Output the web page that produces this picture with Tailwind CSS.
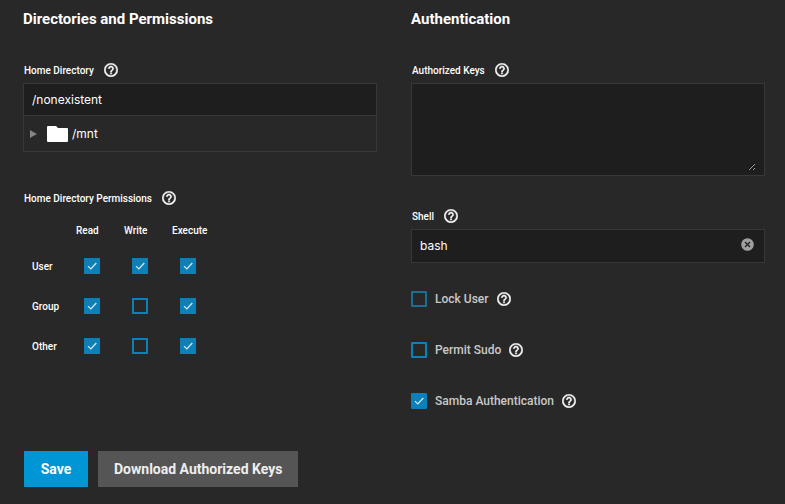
<!DOCTYPE html>
<html lang="en">
<head>
<meta charset="utf-8">
<meta name="viewport" content="width=device-width, initial-scale=1">
<title>Edit User</title>
<script src="https://cdn.jsdelivr.net/npm/@tailwindcss/browser@4"></script>
</head>
<body class="min-h-screen bg-[#282828] font-[Inter,sans-serif] text-white">
<svg class="hidden" aria-hidden="true">
  <symbol id="help" viewBox="1.700 1.700 20.600 20.600"><path fill="currentColor" stroke="currentColor" stroke-width=".6" d="M11 18h2v-2h-2v2zm1-16C6.480 2 2 6.480 2 12s4.480 10 10 10 10-4.480 10-10S17.520 2 12 2zm0 18c-4.410 0-8-3.590-8-8s3.590-8 8-8 8 3.590 8 8-3.590 8-8 8zm0-14c-2.210 0-4 1.790-4 4h2c0-1.100.9-2 2-2s2 .9 2 2c0 2-3 1.750-3 5h2c0-2.250 3-2.500 3-5 0-2.210-1.790-4-4-4z"/></symbol>
  <symbol id="check" viewBox="0 0 16 16"><path fill="none" stroke="currentColor" stroke-width="1.200" d="M4 8.200 6.800 11 12.300 5"/></symbol>
</svg>
<form class="pt-2 pr-5 pb-4 pl-[23px]">
  <div class="grid grid-cols-2 gap-[34px]">
    <section>
      <h2 class="font-[Roboto,sans-serif] text-[15px] leading-[22px] font-bold">Directories and Permissions</h2>
      <div class="mt-8 flex h-4 items-center gap-[10px] pl-px font-[Roboto,sans-serif] text-[10px] font-medium">
        <label for="home">Home Directory</label>
        <button type="button" aria-label="Home Directory help"><svg class="size-[14px]"><use href="#help"/></svg></button>
      </div>
      <input id="home" type="text" value="/nonexistent" class="mt-[5px] block h-[33px] w-full border border-[#383838] bg-[#1e1e1e] px-2 text-[12px] outline-none">
      <div class="flex h-9 items-center border border-t-0 border-[#383838] pl-[6px] text-[12px]">
        <button type="button" aria-label="Expand /mnt"><svg class="h-2 w-[7px] text-[#858585]" viewBox="0 0 7 8"><path fill="currentColor" d="M0 0 7 4 0 8z"/></svg></button>
        <svg class="ml-[10px] h-4 w-[21px]" viewBox="0 0 21 16"><path fill="currentColor" d="M1 0h8l2 2h9a1 1 0 0 1 1 1v12a1 1 0 0 1-1 1H1a1 1 0 0 1-1-1V1a1 1 0 0 1 1-1z"/></svg>
        <span class="ml-1">/mnt</span>
      </div>
      <div class="mt-[38px] flex h-4 items-center gap-[10px] pl-px font-[Roboto,sans-serif] text-[10px] font-medium">
        <span id="perm">Home Directory Permissions</span>
        <button type="button" aria-label="Home Directory Permissions help"><svg class="size-[14px]"><use href="#help"/></svg></button>
      </div>
      <table aria-labelledby="perm" class="mt-2 ml-[9px] table-fixed text-left font-[Roboto,sans-serif] text-[10px] font-medium">
        <thead>
          <tr class="h-8"><td class="w-11"></td><th scope="col" class="w-12 font-medium">Read</th><th scope="col" class="w-12 font-medium">Write</th><th scope="col" class="w-12 font-medium">Execute</th></tr>
        </thead>
        <tbody>
          <tr class="h-10">
            <th scope="row" class="font-medium">User</th>
            <td class="pl-2"><span class="grid size-4"><input type="checkbox" checked aria-label="User read" class="peer col-start-1 row-start-1 size-4 appearance-none border-2 border-[#0c80b8] checked:bg-[#0c80b8]"><svg class="pointer-events-none invisible col-start-1 row-start-1 size-4 text-[#d8e8f0] peer-checked:visible"><use href="#check"/></svg></span></td>
            <td class="pl-2"><span class="grid size-4"><input type="checkbox" checked aria-label="User write" class="peer col-start-1 row-start-1 size-4 appearance-none border-2 border-[#0c80b8] checked:bg-[#0c80b8]"><svg class="pointer-events-none invisible col-start-1 row-start-1 size-4 text-[#d8e8f0] peer-checked:visible"><use href="#check"/></svg></span></td>
            <td class="pl-2"><span class="grid size-4"><input type="checkbox" checked aria-label="User execute" class="peer col-start-1 row-start-1 size-4 appearance-none border-2 border-[#0c80b8] checked:bg-[#0c80b8]"><svg class="pointer-events-none invisible col-start-1 row-start-1 size-4 text-[#d8e8f0] peer-checked:visible"><use href="#check"/></svg></span></td>
          </tr>
          <tr class="h-10">
            <th scope="row" class="font-medium">Group</th>
            <td class="pl-2"><span class="grid size-4"><input type="checkbox" checked aria-label="Group read" class="peer col-start-1 row-start-1 size-4 appearance-none border-2 border-[#0c80b8] checked:bg-[#0c80b8]"><svg class="pointer-events-none invisible col-start-1 row-start-1 size-4 text-[#d8e8f0] peer-checked:visible"><use href="#check"/></svg></span></td>
            <td class="pl-2"><span class="grid size-4"><input type="checkbox" aria-label="Group write" class="peer col-start-1 row-start-1 size-4 appearance-none border-2 border-[#0c80b8] checked:bg-[#0c80b8]"><svg class="pointer-events-none invisible col-start-1 row-start-1 size-4 text-[#d8e8f0] peer-checked:visible"><use href="#check"/></svg></span></td>
            <td class="pl-2"><span class="grid size-4"><input type="checkbox" checked aria-label="Group execute" class="peer col-start-1 row-start-1 size-4 appearance-none border-2 border-[#0c80b8] checked:bg-[#0c80b8]"><svg class="pointer-events-none invisible col-start-1 row-start-1 size-4 text-[#d8e8f0] peer-checked:visible"><use href="#check"/></svg></span></td>
          </tr>
          <tr class="h-10">
            <th scope="row" class="font-medium">Other</th>
            <td class="pl-2"><span class="grid size-4"><input type="checkbox" checked aria-label="Other read" class="peer col-start-1 row-start-1 size-4 appearance-none border-2 border-[#0c80b8] checked:bg-[#0c80b8]"><svg class="pointer-events-none invisible col-start-1 row-start-1 size-4 text-[#d8e8f0] peer-checked:visible"><use href="#check"/></svg></span></td>
            <td class="pl-2"><span class="grid size-4"><input type="checkbox" aria-label="Other write" class="peer col-start-1 row-start-1 size-4 appearance-none border-2 border-[#0c80b8] checked:bg-[#0c80b8]"><svg class="pointer-events-none invisible col-start-1 row-start-1 size-4 text-[#d8e8f0] peer-checked:visible"><use href="#check"/></svg></span></td>
            <td class="pl-2"><span class="grid size-4"><input type="checkbox" checked aria-label="Other execute" class="peer col-start-1 row-start-1 size-4 appearance-none border-2 border-[#0c80b8] checked:bg-[#0c80b8]"><svg class="pointer-events-none invisible col-start-1 row-start-1 size-4 text-[#d8e8f0] peer-checked:visible"><use href="#check"/></svg></span></td>
          </tr>
        </tbody>
      </table>
    </section>
    <section>
      <h2 class="font-[Roboto,sans-serif] text-[15px] leading-[22px] font-bold">Authentication</h2>
      <div class="mt-8 flex h-4 items-center gap-[10px] pl-px font-[Roboto,sans-serif] text-[10px] font-medium">
        <label for="keys">Authorized Keys</label>
        <button type="button" aria-label="Authorized Keys help"><svg class="size-[14px]"><use href="#help"/></svg></button>
      </div>
      <div class="mt-[5px] border border-[#383838] bg-[#1e1e1e] px-2 pt-2 pb-1">
        <textarea id="keys" class="block h-[79px] w-full resize-y text-[12px] scheme-dark outline-none"></textarea>
      </div>
      <div class="mt-8 flex h-4 items-center gap-[10px] pl-px font-[Roboto,sans-serif] text-[10px] font-medium">
        <label for="shell">Shell</label>
        <button type="button" aria-label="Shell help"><svg class="size-[14px]"><use href="#help"/></svg></button>
      </div>
      <div class="mt-[5px] flex h-[34px] items-center border border-[#383838] bg-[#1e1e1e] pr-[10px] pl-2">
        <input id="shell" type="text" role="combobox" aria-expanded="false" value="bash" class="min-w-0 flex-1 text-[12px] outline-none">
        <button type="button" aria-label="Clear shell" class="-mt-1"><svg class="block size-[13px]" viewBox="0 0 13 13"><circle cx="6.500" cy="6.500" r="6.300" fill="#a0a0a0"/><path d="m4 4 5 5m0-5-5 5" stroke="#1e1e1e" stroke-width="1.200"/></svg></button>
      </div>
      <div class="mt-7 flex flex-col gap-[35px] font-[Roboto,sans-serif] text-[12px] leading-4 font-medium text-[#c8c8c8]">
        <div class="flex items-center gap-2">
          <span class="grid size-4"><input id="lock" type="checkbox" class="peer col-start-1 row-start-1 size-4 appearance-none rounded-[1px] border-2 border-[#1c6f94] checked:bg-[#0c80b8]"><svg class="pointer-events-none invisible col-start-1 row-start-1 size-4 text-[#d8e8f0] peer-checked:visible"><use href="#check"/></svg></span>
          <label for="lock">Lock User</label>
          <button type="button" aria-label="Lock User help" class="text-white"><svg class="size-[14px]"><use href="#help"/></svg></button>
        </div>
        <div class="flex items-center gap-2">
          <span class="grid size-4"><input id="sudo" type="checkbox" class="peer col-start-1 row-start-1 size-4 appearance-none rounded-[1px] border-2 border-[#0c80b8] checked:bg-[#0c80b8]"><svg class="pointer-events-none invisible col-start-1 row-start-1 size-4 text-[#d8e8f0] peer-checked:visible"><use href="#check"/></svg></span>
          <label for="sudo">Permit Sudo</label>
          <button type="button" aria-label="Permit Sudo help" class="text-white"><svg class="size-[14px]"><use href="#help"/></svg></button>
        </div>
        <div class="flex items-center gap-2">
          <span class="grid size-4"><input id="samba" type="checkbox" checked class="peer col-start-1 row-start-1 size-4 appearance-none rounded-[1px] border-2 border-[#0c80b8] checked:bg-[#0c80b8]"><svg class="pointer-events-none invisible col-start-1 row-start-1 size-4 text-[#d8e8f0] peer-checked:visible"><use href="#check"/></svg></span>
          <label for="samba">Samba Authentication</label>
          <button type="button" aria-label="Samba Authentication help" class="text-white"><svg class="size-[14px]"><use href="#help"/></svg></button>
        </div>
      </div>
    </section>
  </div>
  <div class="mt-[42px] flex gap-[10px] pl-px font-[Roboto,sans-serif] text-[14px] font-bold">
    <button type="submit" class="h-9 min-w-16 bg-[#0095d5] px-4">Save</button>
    <button type="button" class="h-9 bg-[#555555] px-4 text-[#eeeeee]">Download Authorized Keys</button>
  </div>
</form>
</body>
</html>
